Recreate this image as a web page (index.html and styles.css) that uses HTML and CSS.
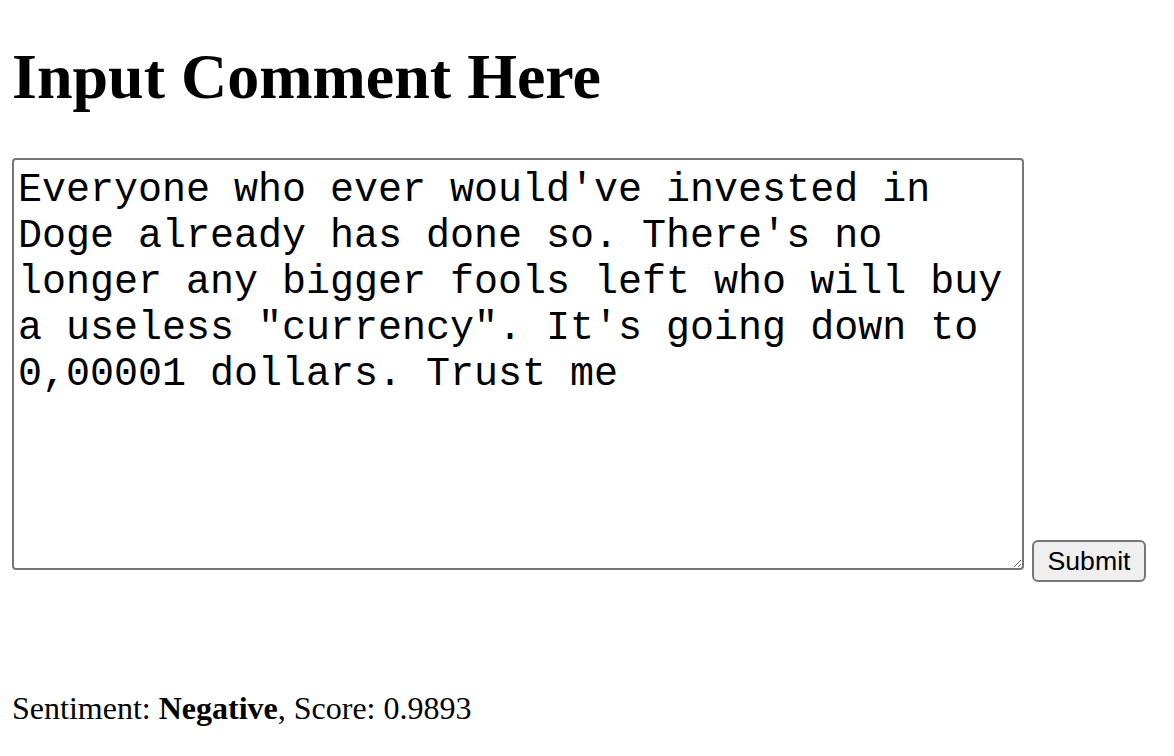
FILE: index.html
```html
<!DOCTYPE html>
<html>
<head>
<meta charset="utf-8">
<link rel="stylesheet" href="styles.css">
</head>
<body>
<h1 class="title">Input Comment Here</h1>
<form class="comment-form">
<textarea class="comment-input">Everyone who ever would've invested in Doge already has done so. There's no longer any bigger fools left who will buy a useless "currency". It's going down to 0,00001 dollars. Trust me</textarea>
<button type="button" class="submit-btn">Submit</button>
</form>
<p class="result">Sentiment: <b>Negative</b>, Score: 0.9893</p>
</body>
</html>
```
FILE: styles.css
```css
html, body {
  margin: 0;
  background: #ffffff;
}
body {
  padding: 0 12px;
  font-family: "Liberation Serif", "Times New Roman", serif;
  font-size: 32px;
  color: #000000;
}
.title {
  font-size: 64px;
  font-weight: bold;
  line-height: normal;
  margin: 40px 0 44px 0;
}
.comment-form {
  display: flex;
  align-items: flex-end;
  gap: 8px;
  margin: 0;
}
.comment-input {
  box-sizing: border-box;
  width: 1012px;
  height: 412px;
  margin: 0;
  padding: 8px 4px 4px 4px;
  border: 2px solid #767676;
  border-radius: 4px;
  font-family: "Liberation Mono", "Courier New", monospace;
  font-size: 40px;
  line-height: 46px;
  color: #000000;
  background: #ffffff;
  resize: both;
}
.submit-btn {
  box-sizing: border-box;
  height: 42px;
  width: 114px;
  margin: 0 0 -12px 0;
  padding: 0 12px;
  border: 2px solid #767676;
  border-radius: 6px;
  background: #efefef;
  font-family: "Liberation Sans", Arial, sans-serif;
  font-size: 26.67px;
  color: #000000;
}
.result {
  margin: 120px 0 0 0;
  line-height: normal;
}
```
